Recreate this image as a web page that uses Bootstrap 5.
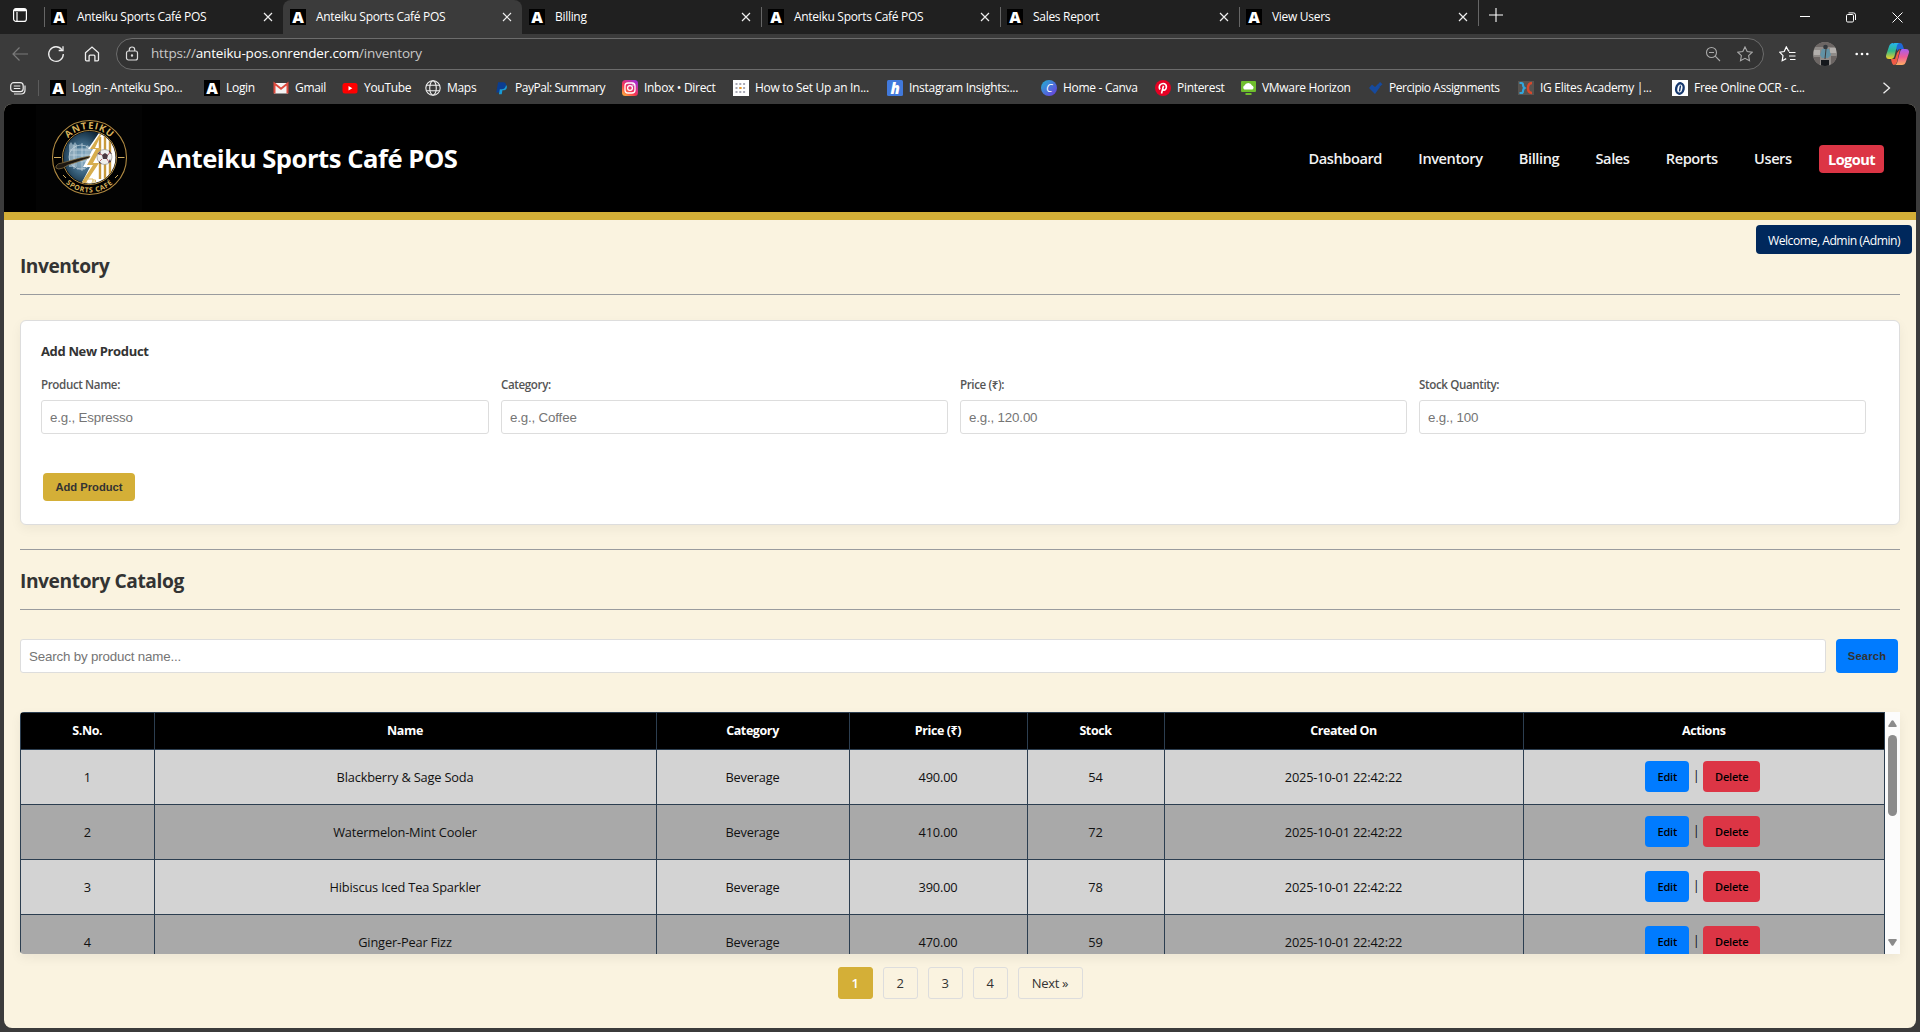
<!DOCTYPE html>
<html lang="en">
<head>
<meta charset="utf-8">
<title>Anteiku Sports Café POS</title>
<link href="https://cdn.jsdelivr.net/npm/bootstrap@5.3.0/dist/css/bootstrap.min.css" rel="stylesheet">
<style>
body{background:#3b3b3b;font-family:"Open Sans","Noto Sans",sans-serif;width:1920px;height:1032px;overflow:hidden;color:#333}
svg{display:block;flex:none}
/* browser frame */
.chrome{height:104px;color:#fff;font-size:12px;letter-spacing:-.3px;white-space:nowrap}
.tabstrip{height:34px;background:#202020}
.tabstrip-menu{width:44px;padding-left:12px}
.tab-item{width:239px;height:34px;padding:0 6px 1px 7px}
.tab-item.divided{background:linear-gradient(#666,#666) 0 7px/1px 20px no-repeat}
.tab-item.current{background:#3b3b3b;border-radius:8px 8px 0 0}
.tab-label{margin-left:10px;flex:1}
.fav{width:16px;height:16px;background:#000;color:#fff;font:800 16px/16px "Open Sans",sans-serif;text-align:center;letter-spacing:0;flex:none}
.newtab{width:36px;height:26px;border-left:1px solid #666;padding-left:10px}
.wincontrols{width:132px;margin-left:auto;padding:0 17px 0 12px}
.toolbar{height:38px;padding-top:1px}
.toolbar .nav-icons{width:116px;padding-left:12px}
.address{width:1648px;height:32px;border:1px solid #6c6c6c;border-radius:16px;background:#333;font-size:13.5px;letter-spacing:-.17px;color:#c8c8c8;padding:0 10px 0 8px}
.address b{font-weight:400;color:#fff}
.toolbar-right{flex:1;padding:0 11px 0 15px}
.bookmarks{height:32px;padding-left:10px}
.bookmarks .sep{width:1px;height:16px;background:#5c5c5c;margin:0 11px 0 12px}
.bm-grid{display:grid;grid-template-columns:154px 69px 69px 83px 70px 127px 111px 154px 154px 114px 86px 128px 149px 154px 210px 9px;align-items:center}
.bm-grid>div{display:flex;align-items:center;gap:6px}
.bm-grid>.tight{letter-spacing:-.45px}
/* application window */
.app{width:1912px;height:924px;margin-left:4px;background:#faf3e0;border-radius:8px;overflow:hidden}
.masthead{height:116px;background:#000;border-bottom:8px solid #d4af37;padding:0 32px}
.brandmark{width:106px;height:106px;background:#030303}
.brandname{font-size:25.6px;font-weight:700;letter-spacing:-.46px;color:#fff;margin-left:16px;padding-top:2px}
.topnav{gap:36.300px;font-size:14.6px;font-weight:600;letter-spacing:-.42px;padding-top:1px}
.topnav a{color:#f2f2f2;text-decoration:none}
.topnav a.logout{background:#dc3545;color:#fff;border-radius:4px;height:28px;line-height:28px;padding:0 9px;margin-left:-9px;font-weight:700;letter-spacing:-.58px}
.welcome{position:absolute;right:8px;top:225px;width:156px;height:29px;border-radius:4px;background:#00285c;color:#fff;font-size:12.2px;letter-spacing:-.5px;line-height:31px;text-align:center}
.page{padding:32px 16px 0}
.page h2{font-size:19.2px;font-weight:700;line-height:27px;letter-spacing:-.5px;margin:0;color:#333}
.page h2.catalog-title{margin-top:17px;letter-spacing:-.42px}
.rule{height:1px;background:#999b9e}
.rule-first{margin-top:15px}
.rule-catalog{margin-top:15px}
.panel{height:205px;margin-top:25px;background:#fff;border:1px solid #ddd;border-radius:6px;box-shadow:0 4px 12px rgba(0,0,0,.05);padding:21px 33px 0 20px}
.panel h3{font-size:13px;font-weight:700;letter-spacing:-.35px;line-height:18px;margin:0 0 17px}
.fields{display:grid;grid-template-columns:448px repeat(3,447px);column-gap:12px}
.fields label{display:block;font-size:11.6px;font-weight:600;letter-spacing:-.38px;line-height:15px;color:#555;margin-bottom:8px}
.field{height:34px;border:1px solid #ddd;border-radius:3px;background:#fff;padding:0 8px;font:13.33px "Liberation Sans",sans-serif;letter-spacing:-.17px;color:#757575;width:100%;display:block}
.field::placeholder{color:#757575;opacity:1}
.search-row{margin-top:29px}
.search-row .field{width:1806px}
.act{border:0;border-radius:4px;font:700 11.2px "Liberation Sans",sans-serif;color:#333}
.act-add{width:92px;height:28px;background:#d4af37;margin:39px 0 0 2px}
.act-search{width:62px;height:34px;background:#007bff;letter-spacing:.2px;margin-right:2px}
/* catalogue */
.catalog{height:242px;margin-top:39px;border-radius:4px 0 0 0;box-shadow:0 4px 12px rgba(0,0,0,.06)}
.catalog-view{width:1865px;height:242px;overflow:hidden;border-radius:4px 0 0 4px}
.stock{width:1865px;table-layout:fixed;border-collapse:collapse;font-size:12.8px;letter-spacing:-.17px;text-align:center;color:#111}
.stock th,.stock td{border:1px solid #2c3e50;vertical-align:middle;padding:1px 0 0}
.stock th{height:37px;background:#000;color:#fff;font-size:12.5px;letter-spacing:-.4px}
.stock td{height:55px;background:#d3d3d3}
.stock td:last-child{padding:0 2px 2px 0}
.stock tr:nth-child(even) td{background:#a9a9a9}
.c-no{width:133.500px}.c-name{width:502px}.c-cat{width:193px}.c-price{width:178px}.c-stock{width:137px}.c-date{width:359px}
.rowbtn{display:inline-block;height:31px;line-height:31px;border-radius:4px;font-size:11px;font-weight:600;letter-spacing:-.2px;color:#000}
.rb-edit{width:44px;background:#007bff}
.rb-del{width:57px;background:#dc3545}
.pipe{width:14px}
.scroller{width:15px;background:#fcfcfc;padding:8px 3px}
.thumb{width:9px;height:81px;border-radius:5px;background:#8b8b8b;margin-top:8px}
.pager{gap:10px;margin-top:13px;font-size:13px;letter-spacing:-.3px}
.pager span{height:32px;line-height:31px;min-width:35px;text-align:center;border:1px solid #ddd;border-radius:3px;color:#333}
.pager span.on{background:#d4af37;border-color:#d4af37;color:#fff;font-weight:600}
.pager span.wide{width:65px}
</style>
<script src="https://cdn.jsdelivr.net/npm/bootstrap@5.3.0/dist/js/bootstrap.bundle.min.js"></script>
</head>
<body>
<svg width="0" height="0" class="position-absolute"><defs>
<symbol id="x" viewBox="0 0 10 10"><path d="M1 1l8 8M9 1L1 9" stroke="#eee" stroke-width="1.2" fill="none"/></symbol>
</defs></svg>
<header class="chrome">
  <div class="tabstrip d-flex">
    <div class="tabstrip-menu d-flex align-items-center pb-1"><svg width="16" height="16" viewBox="0 0 16 16" fill="none" stroke="#fff" stroke-width="1.2"><rect x="1.6" y="1.6" width="12.8" height="12.8" rx="2.5"/><path d="M1.6 3.4h12.8M5 5v9" /><path d="M2.5 3h11" stroke-width="2.6"/></svg></div>
    <div class="tab-item divided d-flex align-items-center"><span class="fav">A</span><span class="tab-label">Anteiku Sports Café POS</span><svg class="me-1" width="10" height="10"><use href="#x"/></svg></div>
    <div class="tab-item current d-flex align-items-center"><span class="fav">A</span><span class="tab-label">Anteiku Sports Café POS</span><svg class="me-1" width="10" height="10"><use href="#x"/></svg></div>
    <div class="tab-item d-flex align-items-center"><span class="fav">A</span><span class="tab-label">Billing</span><svg class="me-1" width="10" height="10"><use href="#x"/></svg></div>
    <div class="tab-item divided d-flex align-items-center"><span class="fav">A</span><span class="tab-label">Anteiku Sports Café POS</span><svg class="me-1" width="10" height="10"><use href="#x"/></svg></div>
    <div class="tab-item divided d-flex align-items-center"><span class="fav">A</span><span class="tab-label">Sales Report</span><svg class="me-1" width="10" height="10"><use href="#x"/></svg></div>
    <div class="tab-item divided d-flex align-items-center"><span class="fav">A</span><span class="tab-label">View Users</span><svg class="me-1" width="10" height="10"><use href="#x"/></svg></div>
    <div class="newtab d-flex align-items-center pt-1"><svg width="14" height="14" viewBox="0 0 14 14" stroke="#fff" stroke-width="1.1"><path d="M7 0v14M0 7h14"/></svg></div>
    <div class="wincontrols d-flex align-items-center justify-content-between">
      <svg width="10" height="10" stroke="#fff"><path d="M0 4.5h10"/></svg>
      <svg width="10" height="11" fill="none" stroke="#fff"><rect x=".5" y="2.5" width="7" height="7.5" rx="1.2"/><path d="M2.5 .9h5a2 2 0 0 1 2 2V8"/></svg>
      <svg width="11" height="11" stroke="#fff"><path d="M.5 .5l10 10M10.500 .5l-10 10"/></svg>
    </div>
  </div>
  <div class="toolbar d-flex align-items-center">
    <div class="nav-icons d-flex align-items-center">
      <svg width="16" height="16" viewBox="0 0 16 16" fill="none" stroke="#7a7a7a" stroke-width="1.2"><path d="M16 8H1M7.500 1.500L1 8l6.500 6.500"/></svg>
      <svg class="ms-3" width="24" height="18" viewBox="-4 -1 24 18" fill="none" stroke="#eee" stroke-width="1.3"><path d="M13.800 3.600A7.300 7.300 0 1 0 15.300 8M15 .3v4.200h-4.300"/></svg>
      <svg class="ms-2" width="32" height="18" viewBox="-8 -1 32 18" fill="none" stroke="#eee" stroke-width="1.3"><path d="M1.500 6.800L8 1l6.500 5.800v7a1 1 0 0 1-1 1h-2.600v-4.600a1 1 0 0 0-1-1H6.100a1 1 0 0 0-1 1v4.600H2.500a1 1 0 0 1-1-1z"/></svg>
    </div>
    <div class="address d-flex align-items-center">
      <svg width="14" height="16" viewBox="0 0 14 16" fill="none" stroke="#ddd" stroke-width="1.2"><rect x="1.500" y="5" width="11" height="9" rx="2"/><path d="M4.300 5V3.700a2.700 2.700 0 0 1 5.400 0V5"/><circle cx="7" cy="9.500" r=".6" fill="#ddd"/></svg>
      <span class="flex-grow-1 ps-2 ms-1">https://<b>anteiku-pos.onrender.com</b>/inventory</span>
      <svg class="me-3" width="16" height="16" viewBox="0 0 16 16" fill="none" stroke="#aaa" stroke-width="1.1"><circle cx="6.500" cy="6.500" r="5"/><path d="M10.200 10.200L15 15M4 6.500h5"/></svg>
      <svg width="16" height="16" viewBox="0 0 16 16" fill="none" stroke="#aaa" stroke-width="1.1"><path d="M8 .9l2.200 4.600 5 .7-3.600 3.500.9 5L8 12.300l-4.500 2.400.9-5L.8 6.200l5-.7z"/></svg>
    </div>
    <div class="toolbar-right d-flex align-items-center justify-content-between">
      <svg width="17" height="16" viewBox="0 0 17 16" fill="none" stroke="#fff" stroke-width="1.2"><path d="M10.500 5.200L9.600 5 7.300 .9 5.200 5.500l-4.500.7 3.300 3.500-.8 5 4-2.100M10 6.500h6.500M10 10h6.500M11 13.500h5.500"/></svg>
      <svg width="24" height="24" viewBox="0 0 24 24"><clipPath id="av"><circle cx="12" cy="12" r="12"/></clipPath><g clip-path="url(#av)"><path fill="#8f8b88" d="M0 0h24v24H0z"/><path fill="#6c6664" d="M0 0h24v5H0zM0 15h7v9H0zM18 14h6v10h-6z"/><path fill="#b2afac" d="M1 8h6v5H1zM17 6h6v5h-6z"/><circle cx="12.500" cy="5" r="2.300" fill="#33393e"/><path fill="#6292a5" d="M9 7h7l2 6-3 3H9l-2-3z"/><path stroke="#413a38" d="M13 7l-1 10"/><path fill="#15181c" d="M8 18h8v6H8z"/></g></svg>
      <svg width="14" height="4" fill="#fff"><circle cx="1.700" cy="2" r="1.300"/><circle cx="7" cy="2" r="1.300"/><circle cx="12.300" cy="2" r="1.300"/></svg>
      <svg width="23" height="22" viewBox="0 0 23 22"><defs><linearGradient id="c1" x2="0" y2="1"><stop stop-color="#25b5ef"/><stop offset=".5" stop-color="#31b98a"/><stop offset="1" stop-color="#f5cf27"/></linearGradient><linearGradient id="c2" x2="0" y2="1"><stop stop-color="#a65df0"/><stop offset=".5" stop-color="#ee5b96"/><stop offset="1" stop-color="#ffae62"/></linearGradient></defs><path fill="#1f67d5" d="M7 0h7q2 0 2.600 2L18 6h-4q-2 0-2.600 2z"/><path fill="url(#c1)" d="M7 1q.7-1 2-1h4q-1.500.5-2 2.500L8.500 13q-.8 3-3.500 3H3q-4 0-2.700-4.500L3 3.500Q4 0 7 0z"/><path fill="#f05a45" d="M5 16h4l2-6 3-4-3 13q-.8 3-3 3-2 0-3-6z"/><path fill="url(#c2)" d="M16 6h4q4 0 2.700 4.500L20 18.500Q19 22 16 22H8q2.500 0 3.200-2.500L14 9q.8-3 2-3z"/></svg>
    </div>
  </div>
  <div class="bookmarks d-flex align-items-center">
    <svg width="16" height="13" viewBox="0 0 16 13" fill="none" stroke="#eee" stroke-width="1.200"><rect x=".7" y=".7" width="12.500" height="9" rx="3"/><path d="M3.800 4h6.500M3.800 6.500h6.500M15 3.500V8q0 4-4 4H4"/></svg>
    <div class="sep"></div>
    <div class="bm-grid">
      <div><span class="fav">A</span>Login - Anteiku Spo...</div>
      <div><span class="fav">A</span>Login</div>
      <div><svg width="16" height="16" viewBox="0 0 16 16"><path fill="#f3f3f3" d="M1 3h14v10.500H1z"/><path fill="none" stroke="#dd4a3e" stroke-width="2" d="M1.500 13.500v-10L8 8.700l6.500-5.200v10"/></svg>Gmail</div>
      <div><svg width="16" height="16" viewBox="0 0 16 16"><rect x=".5" y="3" width="15" height="10.500" rx="2.500" fill="#f00"/><path fill="#fff" d="M6.500 6v4.500l3.800-2.250z"/></svg>YouTube</div>
      <div><svg width="16" height="16" viewBox="0 0 16 16" fill="none" stroke="#eee" stroke-width="1.100"><circle cx="8" cy="8" r="7.200"/><ellipse cx="8" cy="8" rx="3.300" ry="7.200"/><path d="M1.500 5.300h13M1.500 10.700h13"/></svg>Maps</div>
      <div class="tight"><svg width="14" height="16" viewBox="0 0 16 16"><path fill="#0a3d91" d="M3.500 1.500h6q3.500.3 3 3.800-.6 4-5 4H6L5 13H1.500z"/><path fill="#179bd7" d="M12.600 4.500q1.500 1 .9 3.200-.8 3-4.300 3H8.500L7.700 15H4.500l1-5.700h2q4.400 0 5.100-4.800z"/></svg>PayPal: Summary</div>
      <div><svg width="16" height="16" viewBox="0 0 16 16"><defs><linearGradient id="ig" y1="1" x2=".8" y2="0"><stop stop-color="#ffc33b"/><stop offset=".45" stop-color="#f7344f"/><stop offset="1" stop-color="#a52cd8"/></linearGradient></defs><rect width="16" height="16" rx="3.500" fill="url(#ig)"/><g fill="none" stroke="#fff" stroke-width="1.300"><rect x="3" y="3" width="10" height="10" rx="3"/><circle cx="8" cy="8" r="2.400"/></g><circle cx="11" cy="5" r=".7" fill="#fff"/></svg>Inbox • Direct</div>
      <div><svg width="16" height="16" viewBox="0 0 16 16"><path fill="#fff" d="M0 0h16v16H0z"/><path stroke="#a9a9b5" stroke-width="2" stroke-dasharray="2 1.800" d="M2.500 4h11M2.500 8h11M2.500 12h11"/><path fill="#f29a1f" d="M6.500 7h2v2h-2z"/></svg>How to Set Up an In...</div>
      <div><svg width="16" height="16"><rect width="16" height="16" rx="1.500" fill="#4179dc"/><text x="8" y="13.500" text-anchor="middle" fill="#fff" font-family="Open Sans" font-size="15" font-weight="800" font-style="italic">h</text></svg>Instagram Insights:...</div>
      <div><svg width="16" height="16"><defs><linearGradient id="cv" x2="1" y2="1"><stop stop-color="#20b2d2"/><stop offset="1" stop-color="#7038e0"/></linearGradient></defs><circle cx="8" cy="8" r="8" fill="url(#cv)"/><text x="8" y="12" text-anchor="middle" fill="#fff" font-family="Open Sans" font-size="11" font-style="italic">C</text></svg>Home - Canva</div>
      <div><svg width="16" height="16"><circle cx="8" cy="8" r="8" fill="#e60023"/><g fill="none" stroke="#fff" stroke-width="1.600"><path d="M5 9.500Q3.500 7 5 4.900 7 3 9.500 3.700 12 5 11.200 8q-1 2.800-2.800 2-1-.6-.4-2.500M8.500 5.800L6.500 13.500"/></g></svg>Pinterest</div>
      <div><svg width="15" height="16" viewBox="0 0 15 16"><rect y="1" width="15" height="11" rx="1" fill="#6fbe2d"/><path fill="#fff" d="M3.500 9.500a2.200 2.200 0 0 1 0-4 4 4 0 0 1 7.500 0 2.200 2.200 0 0 1 .5 4z"/><path fill="#6fbe2d" d="M4.500 13h6v2h-6z"/></svg>VMware Horizon</div>
      <div class="tight"><svg width="14" height="16" viewBox="0 0 14 16"><path fill="#164a9e" d="M0 8l3-3.500L6 7l3-3 2 3-5 7zM11 2l2.500 2.200L11 6.500 9 4.300z"/></svg>Percipio Assignments</div>
      <div><svg width="16" height="16"><path fill="#57534f" d="M0 1h16v14H0z"/><path fill="none" stroke="#32a5dc" stroke-width="2.200" d="M1.500 3h2q1.500 0 1.500 2t1.500 3Q5 9 5 11t-1.500 2h-2"/><path fill="none" stroke="#d9482c" stroke-width="2.400" d="M14 3q-4 0-4 5t4 5"/></svg>IG Elites Academy |...</div>
      <div><svg width="16" height="16"><path fill="#fff" d="M0 0h16v16H0z"/><ellipse cx="8" cy="8.500" rx="3.700" ry="5.300" fill="none" stroke="#17396f" stroke-width="2.400" transform="rotate(12 8 8)"/><path stroke="#17396f" stroke-width="1.500" d="M8.500 5.500l-1 6"/></svg>Free Online OCR - c...</div>
      <svg width="9" height="12" fill="none" stroke="#eee" stroke-width="1.300"><path d="M1.500 .7L7.500 6l-6 5.300"/></svg>
    </div>
  </div>
</header>

<main class="app">
  <div class="masthead d-flex align-items-center">
    <div class="brandmark">
      <svg width="106" height="106" viewBox="0 0 106 106">
        <defs>
          <clipPath id="disc"><circle cx="53.500" cy="52.500" r="26"/></clipPath>
          <radialGradient id="night"><stop stop-color="#73a5c4"/><stop offset=".6" stop-color="#355c77"/><stop offset="1" stop-color="#10283a"/></radialGradient>
          <path id="arcTop" d="M24.800 52.500a28.700 28.700 0 0 1 57.400 0"/>
          <path id="arcBot" d="M18.500 52.500a35 35 0 0 0 70 0"/>
        </defs>
        <circle cx="53.500" cy="52.500" r="37" fill="#000" stroke="#b08a42" stroke-width="1.100"/>
        <circle cx="53.500" cy="52.500" r="27" fill="#000" stroke="#b08a42"/>
        <g clip-path="url(#disc)">
          <path fill="url(#night)" d="M24 24h45v58H24z"/>
          <g fill="#b9cfdb" opacity=".6"><path d="M33 40l2-3 2 3 2-3 2 3v22h-8zM49 44l2-4 3 2 2-3 1 3v16h-8z"/><path d="M41 43h8v22h-8z" opacity=".6"/></g>
          <g fill="none" stroke="#c8d8e2" stroke-width=".7"><path d="M34 45h20M34 50h22M34 56h20M38 40v24M46 38v28"/><circle cx="45" cy="52" r="12"/></g>
          <path fill="#fff" d="M65 25h18v56H44l10-19h-7l10-18h-5z"/>
          <path stroke="#c99a3d" stroke-width="2.400" d="M64 32v42M69 30v45M74 34v37"/>
          <path fill="#d7ad4d" d="M65 27L54 44h6L51 60h6L44 80l3 2 16-24h-6l8-15h-6l7-15z"/>
          <path d="M50 74h7q0 5-3.500 5T50 74zm7 1h2.500v2H57" fill="none" stroke="#dab865"/>
        </g>
        <circle cx="68.500" cy="52" r="7.500" fill="#eee" stroke="#888" stroke-width=".6"/><path fill="#4b3740" d="M66 50l3-2 3 2-1 4h-4zM61.500 49l3-3v4zM73 45l3 4-3-1zM63 56l3 3-3-1zM74 54l-2 4 3-1z"/><path stroke="#b9646a" fill="none" d="M63 48l3 2M74 47l-2 3M71 54l2 3M66 54l-2 2"/>
        <path fill="#1c1711" stroke="#8b7446" stroke-width=".7" d="M20 61q2-3 6-3l18-5 10-2-1 2-21 7-5 3q-5 2-7 0z"/>
        <path stroke="#d0ad62" d="M18 52.500h7M82 52.500h6.500M27 70l3 3M79 73l3-3"/>
        <g font-family="Open Sans" font-weight="700" fill="#d8b35c" text-anchor="middle"><text font-size="9.500" letter-spacing=".9"><textPath href="#arcTop" startOffset="50%">ANTEIKU</textPath></text><text font-size="7" letter-spacing=".6"><textPath href="#arcBot" startOffset="50%">SPORTS CAFÉ</textPath></text></g>
      </svg>
    </div>
    <div class="brandname">Anteiku Sports Café POS</div>
    <nav class="topnav d-flex align-items-center ms-auto">
      <a href="#">Dashboard</a><a href="#">Inventory</a><a href="#">Billing</a><a href="#">Sales</a><a href="#">Reports</a><a href="#">Users</a><a href="#" class="logout">Logout</a>
    </nav>
  </div>
  <div class="welcome">Welcome, Admin (Admin)</div>
  <div class="page">
    <h2>Inventory</h2>
    <div class="rule rule-first"></div>
    <section class="panel">
      <h3>Add New Product</h3>
      <div class="fields">
        <div><label>Product Name:</label><input class="field" placeholder="e.g., Espresso"></div>
        <div><label>Category:</label><input class="field" placeholder="e.g., Coffee"></div>
        <div><label>Price (₹):</label><input class="field" placeholder="e.g., 120.00"></div>
        <div><label>Stock Quantity:</label><input class="field" placeholder="e.g., 100"></div>
      </div>
      <button class="act act-add">Add Product</button>
    </section>
    <div class="rule mt-4"></div>
    <h2 class="catalog-title">Inventory Catalog</h2>
    <div class="rule rule-catalog"></div>
    <div class="search-row d-flex justify-content-between">
      <input class="field" placeholder="Search by product name...">
      <button class="act act-search">Search</button>
    </div>
    <div class="catalog d-flex">
      <div class="catalog-view">
        <table class="stock">
          <colgroup><col class="c-no"><col class="c-name"><col class="c-cat"><col class="c-price"><col class="c-stock"><col class="c-date"><col></colgroup>
          <thead><tr><th>S.No.</th><th>Name</th><th>Category</th><th>Price (₹)</th><th>Stock</th><th>Created On</th><th>Actions</th></tr></thead>
          <tbody>
            <tr><td>1</td><td>Blackberry &amp; Sage Soda</td><td>Beverage</td><td>490.00</td><td>54</td><td>2025-10-01 22:42:22</td><td><div class="d-flex justify-content-center align-items-center"><span class="rowbtn rb-edit">Edit</span><span class="pipe">|</span><span class="rowbtn rb-del">Delete</span></div></td></tr>
            <tr><td>2</td><td>Watermelon-Mint Cooler</td><td>Beverage</td><td>410.00</td><td>72</td><td>2025-10-01 22:42:22</td><td><div class="d-flex justify-content-center align-items-center"><span class="rowbtn rb-edit">Edit</span><span class="pipe">|</span><span class="rowbtn rb-del">Delete</span></div></td></tr>
            <tr><td>3</td><td>Hibiscus Iced Tea Sparkler</td><td>Beverage</td><td>390.00</td><td>78</td><td>2025-10-01 22:42:22</td><td><div class="d-flex justify-content-center align-items-center"><span class="rowbtn rb-edit">Edit</span><span class="pipe">|</span><span class="rowbtn rb-del">Delete</span></div></td></tr>
            <tr><td>4</td><td>Ginger-Pear Fizz</td><td>Beverage</td><td>470.00</td><td>59</td><td>2025-10-01 22:42:22</td><td><div class="d-flex justify-content-center align-items-center"><span class="rowbtn rb-edit">Edit</span><span class="pipe">|</span><span class="rowbtn rb-del">Delete</span></div></td></tr>
          </tbody>
        </table>
      </div>
      <div class="scroller d-flex flex-column">
        <svg width="9" height="7" fill="#8b8b8b"><path d="M3.500 .7q1-1 2 0l3.200 5Q9 7 8 7H1Q0 7 .3 5.700z"/></svg>
        <div class="thumb"></div>
        <svg class="mt-auto" width="9" height="7" fill="#8b8b8b"><path d="M3.500 6.300q1 1 2 0l3.200-5Q9 0 8 0H1Q0 0 .3 1.300z"/></svg>
      </div>
    </div>
    <div class="pager d-flex justify-content-center"><span class="on">1</span><span>2</span><span>3</span><span>4</span><span class="wide">Next »</span></div>
  </div>
</main>
</body>
</html>
